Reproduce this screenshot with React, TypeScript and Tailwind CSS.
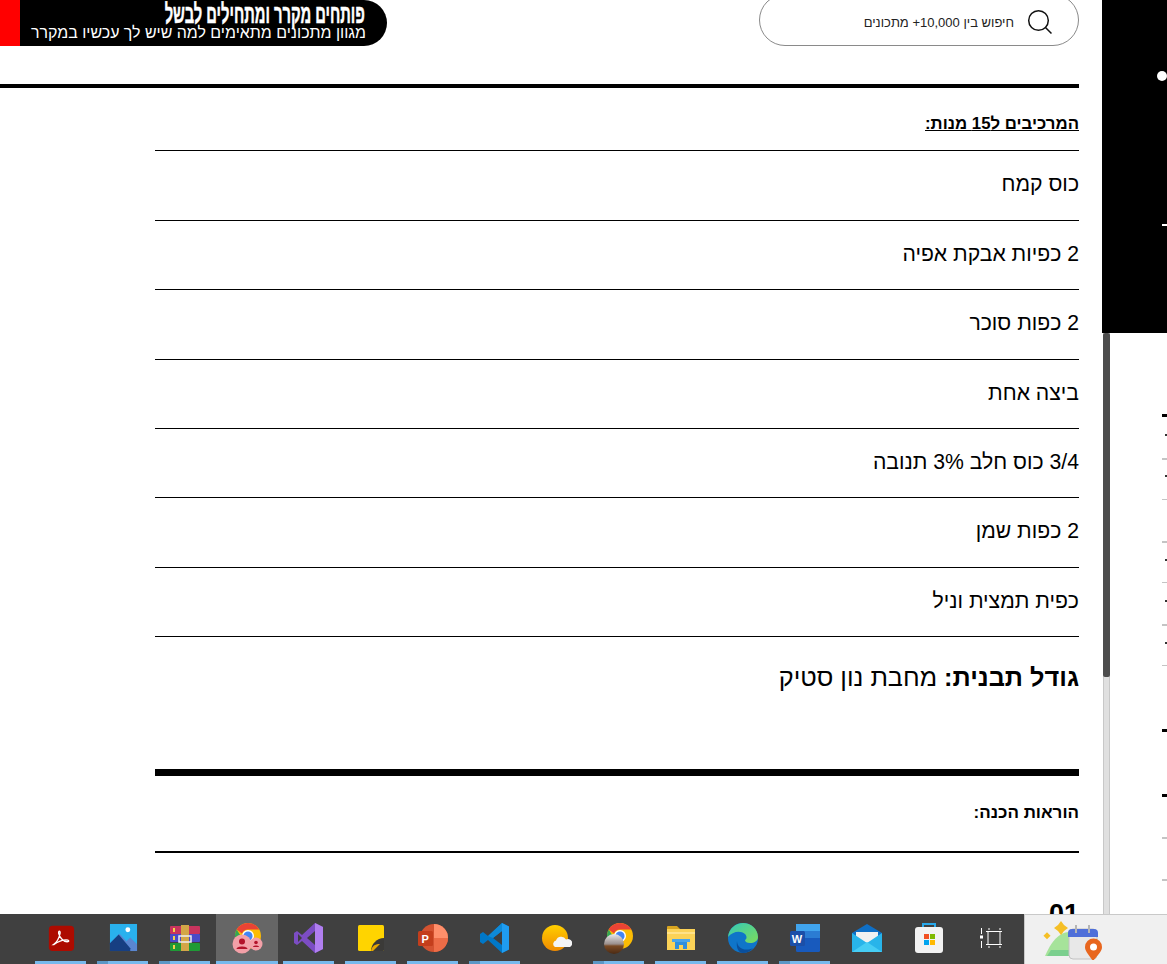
import React from "react";

const F = "font-['Liberation_Sans','DejaVu_Sans',sans-serif]";

const rows = ["כוס קמח", "2 כפיות אבקת אפיה", "2 כפות סוכר", "ביצה אחת", "3/4 כוס חלב 3% תנובה", "2 כפות שמן", "כפית תמצית וניל"];

const Pdf = () => (
  <svg width="28" height="28" viewBox="0 0 30 30"><rect x="2" y="2" width="27" height="27" rx="4" fill="#ad0b00" /><path d="M7 22c3-2 6-7 7-12 .5-3-2-3-1.500 0 .8 4 5 9 9 9 3 0 2-2-1-2-4 0-9 2-13 5z" fill="none" stroke="#fff" strokeWidth="1.400" /></svg>
);
const Photos = () => (
  <svg width="29" height="29" viewBox="0 0 30 30"><rect x="1" y="1" width="28" height="28" fill="#29b1ee" /><circle cx="19.500" cy="7" r="2.500" fill="#fff" /><path d="M1 29V21L11 11l7 8 4-4 7 7v7z" fill="#5a86d1" /><path d="M1 29v-8L10 12l12 14v3z" fill="#173f82" /></svg>
);
const Rar = () => (
  <svg width="32" height="28" viewBox="0 0 32 28"><rect x="1" y="2" width="30" height="8" rx="1" fill="#c9345e" /><rect x="1" y="10" width="30" height="8" rx="1" fill="#4a4ac8" /><rect x="1" y="19" width="30" height="8" rx="1" fill="#1f9a36" /><rect x="12" y="1" width="8" height="26" fill="#d3a647" /><rect x="10" y="12" width="12" height="6" fill="none" stroke="#eee" strokeWidth="1.500" /><rect x="4" y="4" width="2" height="4" fill="#f3d24a" /><rect x="4" y="12" width="2" height="4" fill="#f3d24a" /><rect x="4" y="21" width="2" height="4" fill="#f3d24a" /></svg>
);
const Chrome = ({ children }: { children?: React.ReactNode }) => (
  <svg width="34" height="34" viewBox="0 0 34 34">
    <circle cx="18" cy="15" r="13" fill="#fbbc04" />
    <path d="M18 2a13 13 0 0 1 11.300 6.500H18a6.500 6.500 0 0 0-6 4L6.700 8.500A13 13 0 0 1 18 2z" fill="#ea4335" />
    <path d="M5 15a13 13 0 0 1 1.700-6.500L12.500 18 18 28A13 13 0 0 1 5 15z" fill="#34a853" />
    <circle cx="18" cy="15" r="6" fill="#fff" /><circle cx="18" cy="15" r="4.600" fill="#4285f4" />
    {children}
  </svg>
);
const ChromeA = () => (
  <Chrome>
    <circle cx="12" cy="23" r="9.500" fill="#f3a0a8" /><circle cx="12" cy="20.500" r="3" fill="#b3122a" /><path d="M6.500 28c0-3.500 11-3.500 11 0z" fill="#b3122a" />
    <circle cx="26" cy="23" r="6.500" fill="#f3a0a8" /><circle cx="26" cy="21.500" r="1.800" fill="#b3122a" /><path d="M23 26c0-2 6-2 6 0z" fill="#b3122a" />
  </Chrome>
);
const ChromeB = () => (
  <Chrome>
    <defs><linearGradient id="gb" x1="0" y1="0" x2="0" y2="1"><stop offset="0" stopColor="#e8e8ea" /><stop offset=".5" stopColor="#9a8f8c" /><stop offset=".6" stopColor="#7a4a24" /><stop offset="1" stopColor="#4a2a14" /></linearGradient></defs>
    <circle cx="12" cy="23" r="10" fill="url(#gb)" />
  </Chrome>
);
const VS = () => (
  <svg width="32" height="32" viewBox="0 0 32 32"><path d="M22 1l8 4v22l-8 4-13-12-5 4-3-2V11l3-2 5 4z" fill="#7c4dc4" /><path d="M22 1l8 4v22l-8 4z" fill="#b17ff0" /><path d="M22 9v14l-8-7z" fill="#3f3f3f" /><path d="M5 12v8l4-4z" fill="#3f3f3f" /></svg>
);
const Sticky = () => (
  <svg width="28" height="28" viewBox="0 0 28 28"><rect x="1" y="1" width="26" height="26" rx="1.500" fill="#ffd400" /><path d="M27 14v12a1 1 0 0 1-1 1H14c0-7 6-13 13-13z" fill="#3b3a38" /><path d="M14 27c1-6 5-7 9-7l-7 7z" fill="#e8a800" /></svg>
);
const Ppt = () => (
  <svg width="32" height="30" viewBox="0 0 32 30"><circle cx="17" cy="15" r="14" fill="#d35230" /><path d="M17 1a14 14 0 0 1 14 14H17z" fill="#ff8f6b" /><path d="M17 15h14a14 14 0 0 1-14 14z" fill="#ed6c47" /><rect x="1" y="8" width="15" height="15" rx="1.500" fill="#c43e1c" /><text x="4.500" y="20" fontSize="11" fontWeight="700" fill="#fff" fontFamily="Liberation Sans">P</text></svg>
);
const Code = () => (
  <svg width="32" height="32" viewBox="0 0 32 32"><path d="M23 1l7 3.500v23L23 31 9 18l-5 4-3-2v-8l3-2 5 4z" fill="#0078c8" /><path d="M23 1l7 3.500v23L23 31z" fill="#1f9cf0" /><path d="M23 9v14l-9-7z" fill="#3f3f3f" /><path d="M23 1L9 14l-5-4 5 4 5 2 9-7z" fill="#0e8ad8" /></svg>
);
const Weather = () => (
  <svg width="30" height="28" viewBox="0 0 30 28"><defs><linearGradient id="wy" x1="0" y1="0" x2="0" y2="1"><stop offset="0" stopColor="#ffcf00" /><stop offset="1" stopColor="#f08a00" /></linearGradient></defs><circle cx="13" cy="14" r="13" fill="url(#wy)" /><path d="M13 23a3.500 3.500 0 0 1 1-6.500 5.500 5.500 0 0 1 10-1 4 4 0 0 1 4 7.500z" fill="#f4f4f6" /></svg>
);
const Explorer = () => (
  <svg width="30" height="28" viewBox="0 0 30 28"><path d="M1 3a1 1 0 0 1 1-1h9l3 3h-13z" fill="#d9a520" /><path d="M1 5h28v21H1z" fill="#fbd257" /><path d="M1 8h28v2H1z" fill="#ffe289" /><path d="M9 25v-8h12v8h-4v-4h-4v4z" fill="#2f8fdd" /><rect x="6" y="15" width="18" height="3" fill="#48a4ea" /></svg>
);
const Edge = () => (
  <svg width="32" height="32" viewBox="0 0 32 32"><defs><linearGradient id="eg" x1="0" y1="0" x2="1" y2="1"><stop offset="0" stopColor="#34c9b8" /><stop offset="1" stopColor="#7ddc5a" /></linearGradient></defs><circle cx="16" cy="16" r="15" fill="#0f75c9" /><path d="M1 15C2 6 9 1 16 1c8 0 15 6 15 14 0 4-4 6-8 6-3 0-5-1-5-3 2-1 2-4 0-6-5-4-13-2-17 3z" fill="url(#eg)" /><path d="M10 19c0 7 8 11 16 7-3 4-7 5-10 5-5 0-7-6-6-12z" fill="#0a4f9c" /></svg>
);
const Word = () => (
  <svg width="32" height="30" viewBox="0 0 32 30"><rect x="7" y="1" width="24" height="28" rx="1.500" fill="#185abd" /><rect x="7" y="1" width="24" height="7" fill="#41a5ee" /><rect x="7" y="8" width="24" height="7" fill="#2b7cd3" /><rect x="1" y="8" width="15" height="15" rx="1.500" fill="#1b4fa8" /><text x="2.700" y="20" fontSize="11" fontWeight="700" fill="#fff" fontFamily="Liberation Sans">W</text></svg>
);
const Mail = () => (
  <svg width="32" height="30" viewBox="0 0 32 30"><path d="M1 10L16 1l15 9v19H1z" fill="#0f6fc6" /><path d="M5 9h22v10l-11 6-11-6z" fill="#f1f1f1" /><path d="M1 10l15 10 15-10v19H1z" fill="#28b4ea" /><path d="M1 29l15-10 15 10z" fill="#46cdf4" /></svg>
);
const Store = () => (
  <svg width="30" height="32" viewBox="0 0 30 32"><path d="M9 7V2h12v5" fill="none" stroke="#28a8ea" strokeWidth="2" /><rect x="1" y="5" width="28" height="26" rx="3" fill="#f2f2f2" /><rect x="10" y="12" width="5" height="5" fill="#f25022" /><rect x="16" y="12" width="5" height="5" fill="#7fba00" /><rect x="10" y="18" width="5" height="5" fill="#00a4ef" /><rect x="16" y="18" width="5" height="5" fill="#ffb900" /></svg>
);
const TaskView = () => (
  <svg width="22" height="20" viewBox="0 0 22 20" fill="none" stroke="#fff" strokeWidth="1"><path d="M1.500 0v6M1.500 13v7" /><rect x="0" y="7.500" width="3" height="3" fill="#fff" stroke="none" /><path d="M6 3.500h16M6 16.500h16M8 3.500v13M20 3.500v13M9 0v2M20 0v2M9 18v2M20 18v2" /></svg>
);

const apps: { el: React.ReactNode; line?: boolean; split?: boolean; active?: boolean }[] = [
  { el: <Pdf />, line: true },
  { el: <Photos />, line: true, split: true },
  { el: <Rar />, line: true, split: true },
  { el: <ChromeA />, line: true, active: true },
  { el: <VS />, line: true },
  { el: <Sticky />, line: true },
  { el: <Ppt />, line: true },
  { el: <Code />, line: true, split: true },
  { el: <Weather /> },
  { el: <ChromeB />, line: true, split: true },
  { el: <Explorer />, line: true },
  { el: <Edge />, line: true },
  { el: <Word />, line: true, split: true },
  { el: <Mail /> },
  { el: <Store /> },
  { el: <TaskView /> },
];

const Tick = ({ kind, className }: { kind: "b" | "g" | "t" | "d"; className: string }) => {
  const look = kind === "b" ? "w-[5px] h-[3px] bg-black" : kind === "g" ? "w-[5px] h-[2px] bg-[#c4c4c4]" : kind === "t" ? "w-[5px] h-px bg-[#c4c4c4]" : "w-[2px] h-[2px] bg-[#333]";
  return <div className={`${look} ${className}`} />;
};

export default function App() {
  return (
    <div className={`w-[1167px] h-[964px] overflow-hidden bg-white flex flex-col ${F}`}>
      <div className="h-[914px] flex overflow-hidden">
        <div dir="rtl" className="w-[1102px] h-[914px] overflow-hidden pr-[23px] text-black">
          <div className="flex justify-between items-start h-[84px]">
            <div className="w-[320px] h-[52px] -mt-[6px] rounded-full border border-[#8a8a8a] flex items-center gap-[13px] pr-[25px] pt-[3px]">
              <svg width="26" height="26" viewBox="0 0 26 26" fill="none" stroke="#111" strokeWidth="1.500"><circle cx="11.500" cy="11.500" r="9.800" /><path d="M18.500 18.500l6 6" /></svg>
              <span className="text-[13px] text-[#222] mt-[2px]">חיפוש בין 10,000+ מתכונים</span>
            </div>
            <div dir="ltr" className="flex h-[46px]">
              <div className="w-[20px] bg-[#ff0000]" />
              <div dir="rtl" className="w-[367px] h-[46px] bg-black rounded-r-[23px] pr-[20px] text-white overflow-hidden">
                <div className="text-[27px] leading-[22px] font-bold mt-[3px] pr-[4px] whitespace-nowrap origin-right scale-x-[0.545] [-webkit-text-stroke:0.5px_white]">פותחים מקרר ומתחילים לבשל</div>
                <div className="text-[15.950px] leading-[16px] pr-px whitespace-nowrap">מגוון מתכונים מתאימים למה שיש לך עכשיו במקרר</div>
              </div>
            </div>
          </div>
          <div className="h-1 bg-black w-[1079px]" />
          <div className="w-[924px]">
            <div className="h-[62.400px] flex items-end pb-[18px]">
              <span className="text-[16.800px] leading-[17px] font-bold underline">המרכיבים ל15 מנות:</span>
            </div>
            {rows.map((r) => (
              <div key={r} className="h-[69.400px] border-t border-black flex items-center text-[21.200px] leading-none pb-[3px]">{r}</div>
            ))}
            <div className="border-t border-black pt-[26px] text-[25.300px] leading-[28px] h-[132.600px]">
              <b>גודל תבנית:</b> מחבת נון סטיק
            </div>
            <div className="h-[7px] bg-black" />
            <div className="h-[77px] border-b-2 border-black flex items-center text-[17px] font-bold">הוראות הכנה:</div>
            <div className="mt-[44px] text-[27px] leading-[34px] font-bold">01</div>
          </div>
        </div>
        <div className="w-[65px] flex flex-col">
          <div className="h-[333px] bg-black flex flex-col items-end">
            <div className="w-[10px] h-[10px] rounded-full bg-white mt-[71px] -mb-[1px]" />
            <div className="w-[5px] h-[2px] bg-white mt-[144px]" />
          </div>
          <div className="flex-1 flex">
            <div className="ml-px w-[7px] h-[581px] bg-[#e0e0e0] border-x border-[#c8c8c8]">
              <div className="-mx-px h-[344px] bg-[#4d4d4d] rounded-[2px]" />
            </div>
            <div className="flex-1 flex flex-col items-end">
              <Tick kind="b" className="mt-[81px]" />
              <Tick kind="d" className="mt-[17px]" />
              <Tick kind="g" className="mt-[22px]" />
              <Tick kind="d" className="mt-[15px]" />
              <Tick kind="t" className="mt-[22px]" />
              <Tick kind="g" className="mt-[41px]" />
              <Tick kind="d" className="mt-[16px]" />
              <Tick kind="t" className="mt-[21px]" />
              <Tick kind="d" className="mt-[17px]" />
              <Tick kind="g" className="mt-[22px]" />
              <Tick kind="d" className="mt-[16px]" />
              <Tick kind="t" className="mt-[21px]" />
              <Tick kind="b" className="mt-[63px]" />
              <Tick kind="b" className="mt-[62px]" />
              <Tick kind="g" className="mt-[40px]" />
              <Tick kind="g" className="mt-[40px]" />
            </div>
          </div>
        </div>
      </div>
      <div className="h-[50px] flex bg-[#404040]">
        <div className="w-[30px]" />
        {apps.map((a, i) => (
          <div key={i} className={`w-[62px] h-[50px] relative flex items-center justify-center ${a.active ? "bg-[#666666]" : ""}`}>
            <div className="-mt-[3px] flex">{a.el}</div>
            {a.line && (
              <div className={`absolute bottom-0 h-[3px] flex ${a.active ? "left-0 right-0" : "left-[5px] w-[51px]"}`}>
                {a.split && <div className="w-[11px] bg-[#5b97c6]" />}
                <div className="flex-1 bg-[#76b9ed]" />
              </div>
            )}
          </div>
        ))}
        <div className="w-[2px]" />
        <div className="flex-1 bg-[#f0f0f0] border-l border-t border-[#c9c9c9] flex items-center pl-[18px]">
          <svg width="64" height="40" viewBox="0 0 64 40">
            <path d="M2 36c6-14 14-24 24-24 6 0 12 6 16 24z" fill="#a6e39a" />
            <path d="M4 36h30v-6H8z" fill="#7bcf8e" />
            <path d="M15 5l3-4 3 4 4 3-4 3-3 4-3-4-4-3z" fill="#f5bf26" />
            <rect x="2" y="13" width="5" height="5" fill="#f5bf26" transform="rotate(45 4 15)" />
            <rect x="26" y="9" width="28" height="30" rx="4" fill="#e8e8e8" stroke="#c2c2c2" />
            <path d="M25 17v-4a4 4 0 0 1 4-4h22a4 4 0 0 1 4 4v4z" fill="#4f6fd9" />
            <path d="M33 5v8M46 5v8" stroke="#b5b5b5" strokeWidth="2" />
            <path d="M50 41c-5-7-8-10-8-14a8.500 8.500 0 0 1 17 0c0 4-3 7-9 14z" fill="#e8661e" />
            <circle cx="50.500" cy="27" r="3.500" fill="#fff" />
          </svg>
        </div>
      </div>
    </div>
  );
}
